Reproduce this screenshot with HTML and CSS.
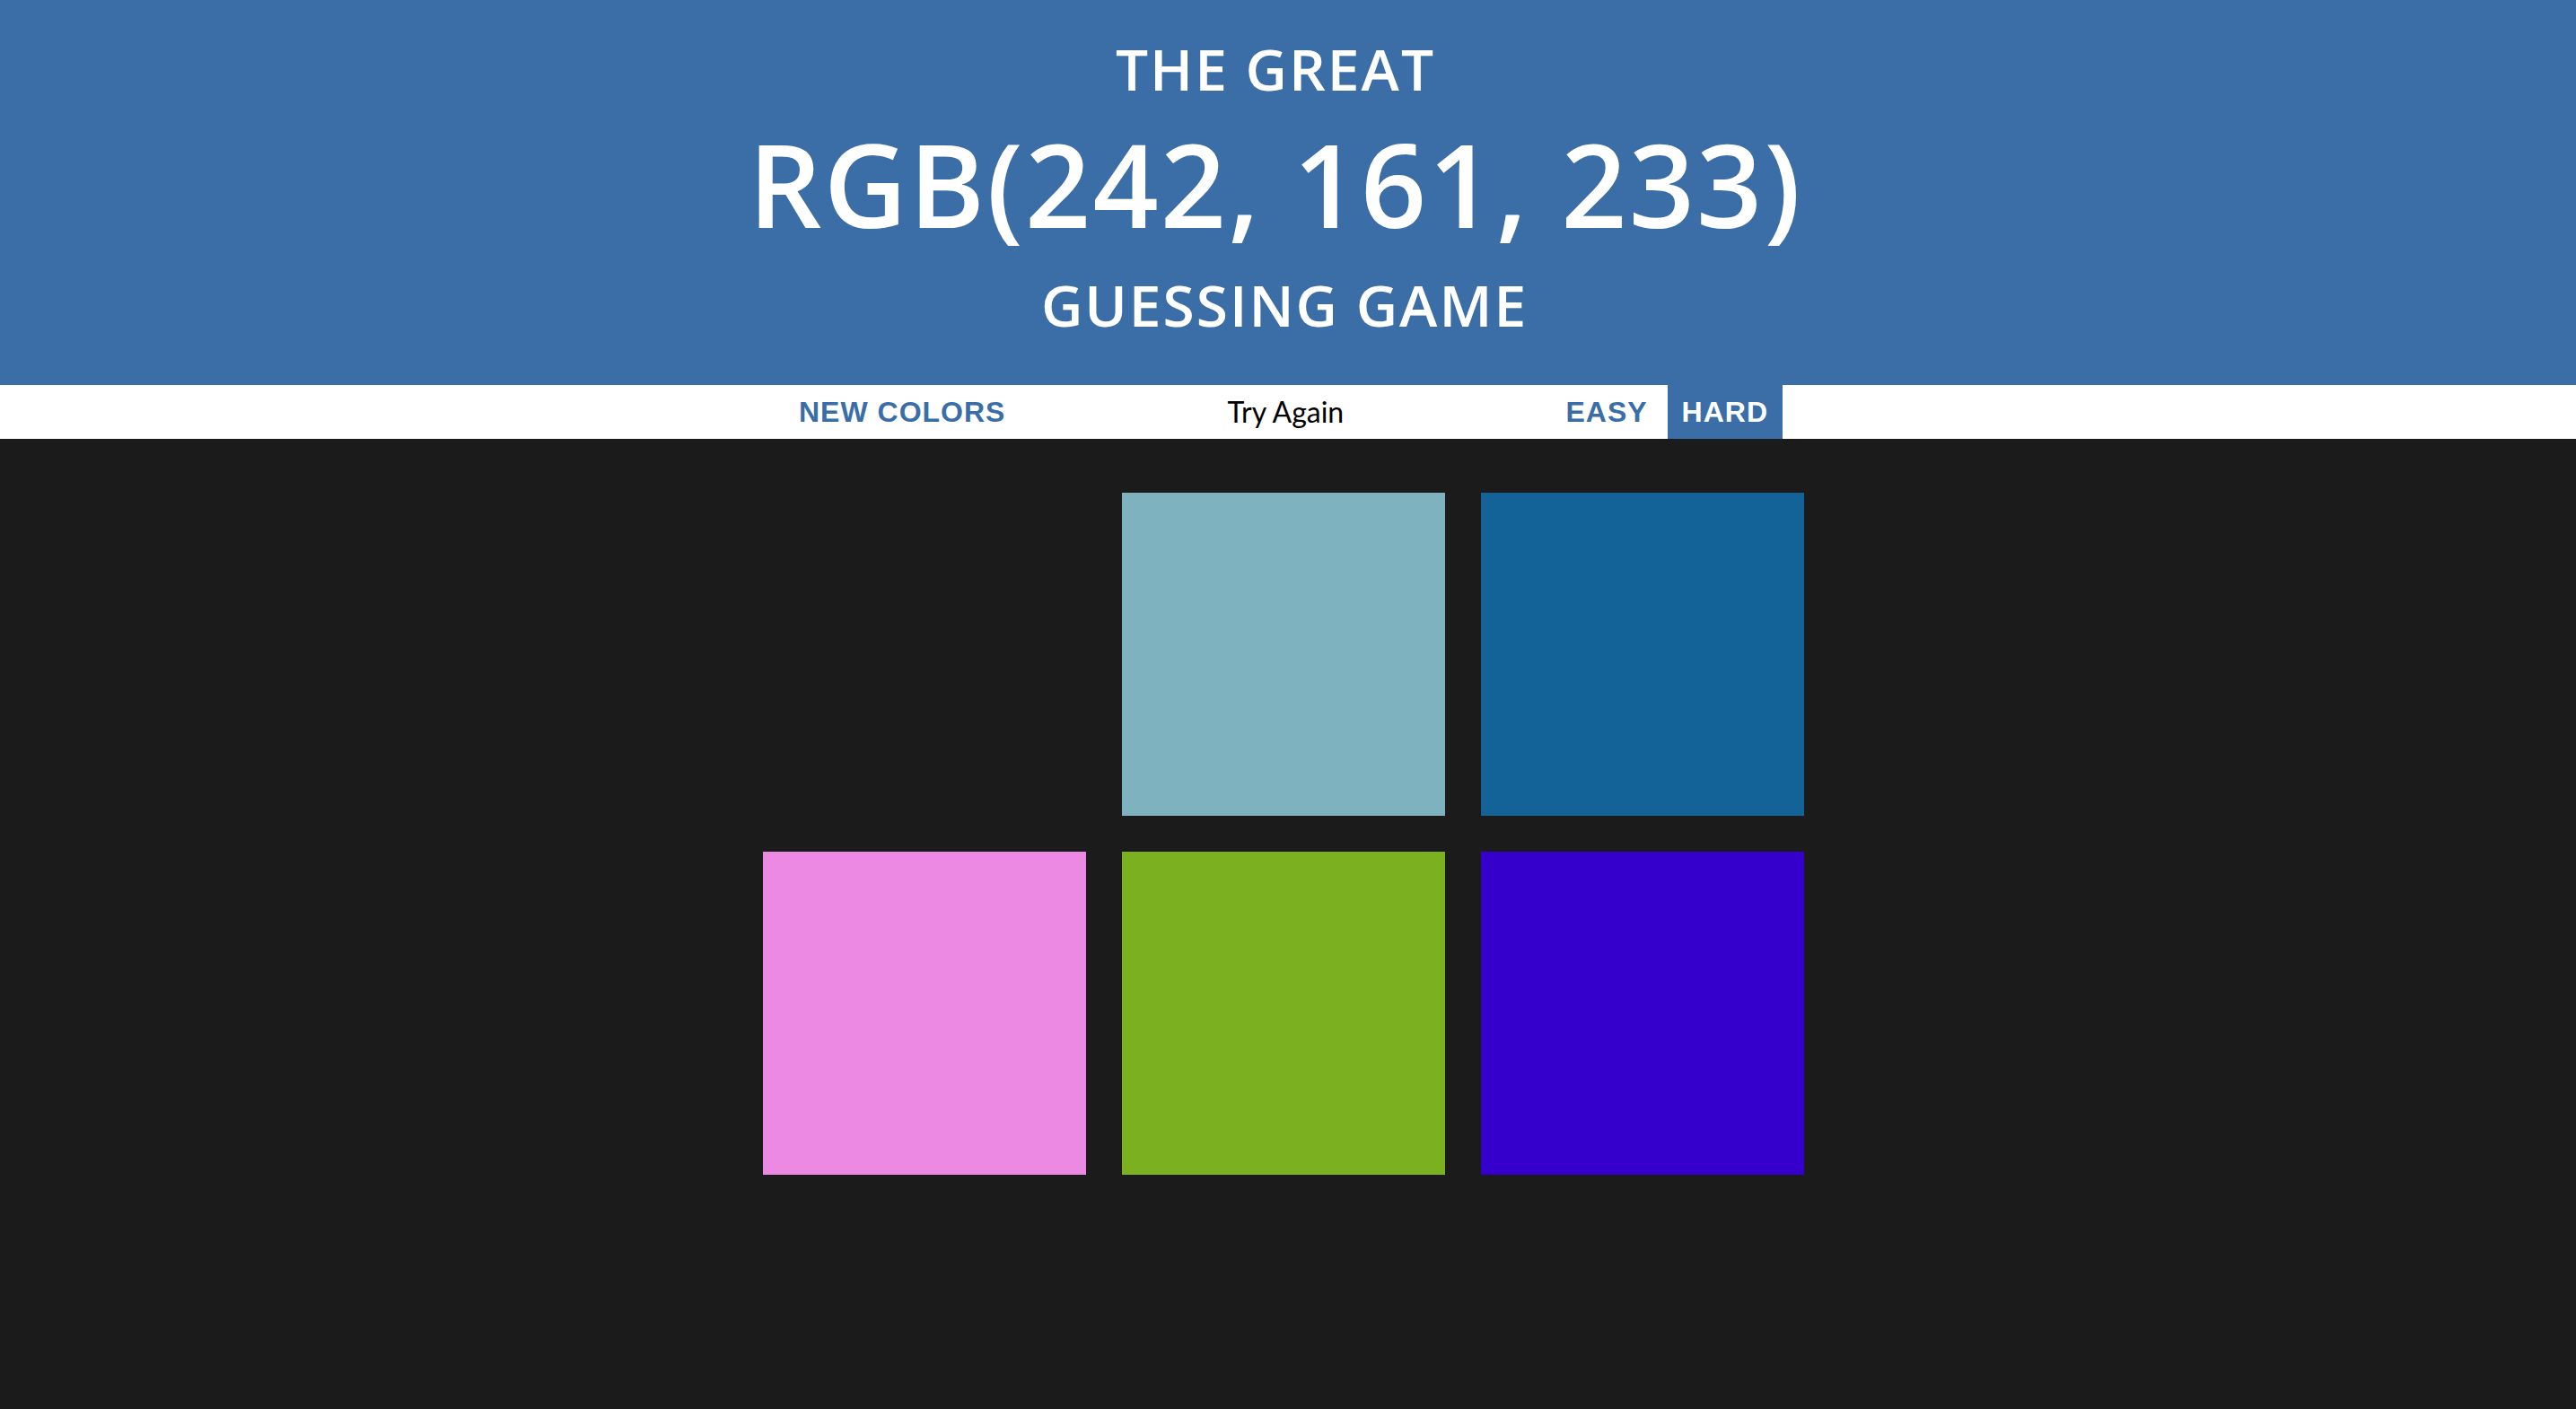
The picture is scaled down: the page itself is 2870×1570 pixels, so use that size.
FILE: index.html
```html
<!DOCTYPE html>
<html lang="en">
<head>
<meta charset="utf-8">
<title>Color Game</title>
<link rel="stylesheet" href="styles.css">
</head>
<body>
<h1 class="title">
  <span class="title-line title-first">The Great</span>
  <span class="title-big" id="colorDisplay">RGB(242, 161, 233)</span>
  <span class="title-line title-last">Guessing Game</span>
</h1>
<div class="stripe">
  <button class="btn btn-reset">New Colors</button>
  <span class="message">Try Again</span>
  <button class="btn btn-mode">Easy</button>
  <button class="btn btn-mode selected">Hard</button>
</div>
<div class="board">
  <div class="square sq-hidden"></div>
  <div class="square sq-lightblue"></div>
  <div class="square sq-darkblue"></div>
  <div class="square sq-pink"></div>
  <div class="square sq-green"></div>
  <div class="square sq-purple"></div>
</div>
</body>
</html>
```

FILE: styles.css
```css
html, body {
  margin: 0;
  padding: 0;
}
body {
  background: #1b1b1b;
  font-family: "Lato", "Open Sans", sans-serif;
  min-height: 1570px;
}
.title {
  margin: 0;
  background: #3b6ea7;
  color: #ffffff;
  text-align: center;
  text-transform: uppercase;
  font-family: "Open Sans", "Lato", sans-serif;
  font-weight: 600;
  padding: 42px 8px 0 0;
  height: 429px;
  box-sizing: border-box;
}
.title-line {
  display: block;
  font-size: 64px;
  line-height: 70px;
  letter-spacing: 2px;
}
.title-first {
  padding-right: 20px;
}
.title-big {
  display: block;
  font-size: 128px;
  line-height: 185px;
  letter-spacing: 2.2px;
  padding-right: 20px;
}
.title-last {
  line-height: 85px;
}
.stripe {
  background: #ffffff;
  height: 60px;
  display: flex;
  justify-content: center;
  align-items: stretch;
  padding-right: 10px;
}
.btn {
  border: none;
  background: none;
  margin: 0;
  padding: 0 16px;
  font-family: "Liberation Sans", Arial, sans-serif;
  font-weight: 700;
  font-size: 32px;
  letter-spacing: 1px;
  text-transform: uppercase;
  color: #3b6ea7;
  height: 60px;
  line-height: 60px;
}
.btn-mode + .btn-mode {
  margin-left: 6px;
}
.selected {
  background: #3b6ea7;
  color: #ffffff;
}
.message {
  width: 574px;
  margin: 0 9px;
  text-align: center;
  font-size: 32px;
  line-height: 60px;
  color: #000000;
}
.board {
  width: 1200px;
  margin: 40px auto 0;
  position: relative;
  left: -5px;
  display: flex;
  flex-wrap: wrap;
}
.square {
  width: 360px;
  height: 360px;
  margin: 20px;
}
.sq-hidden { background: #1b1b1b; }
.sq-lightblue { background: #7fb2bf; }
.sq-darkblue { background: #136399; }
.sq-pink { background: #ec89e2; }
.sq-green { background: #7bb021; }
.sq-purple { background: #3500cc; }
```
